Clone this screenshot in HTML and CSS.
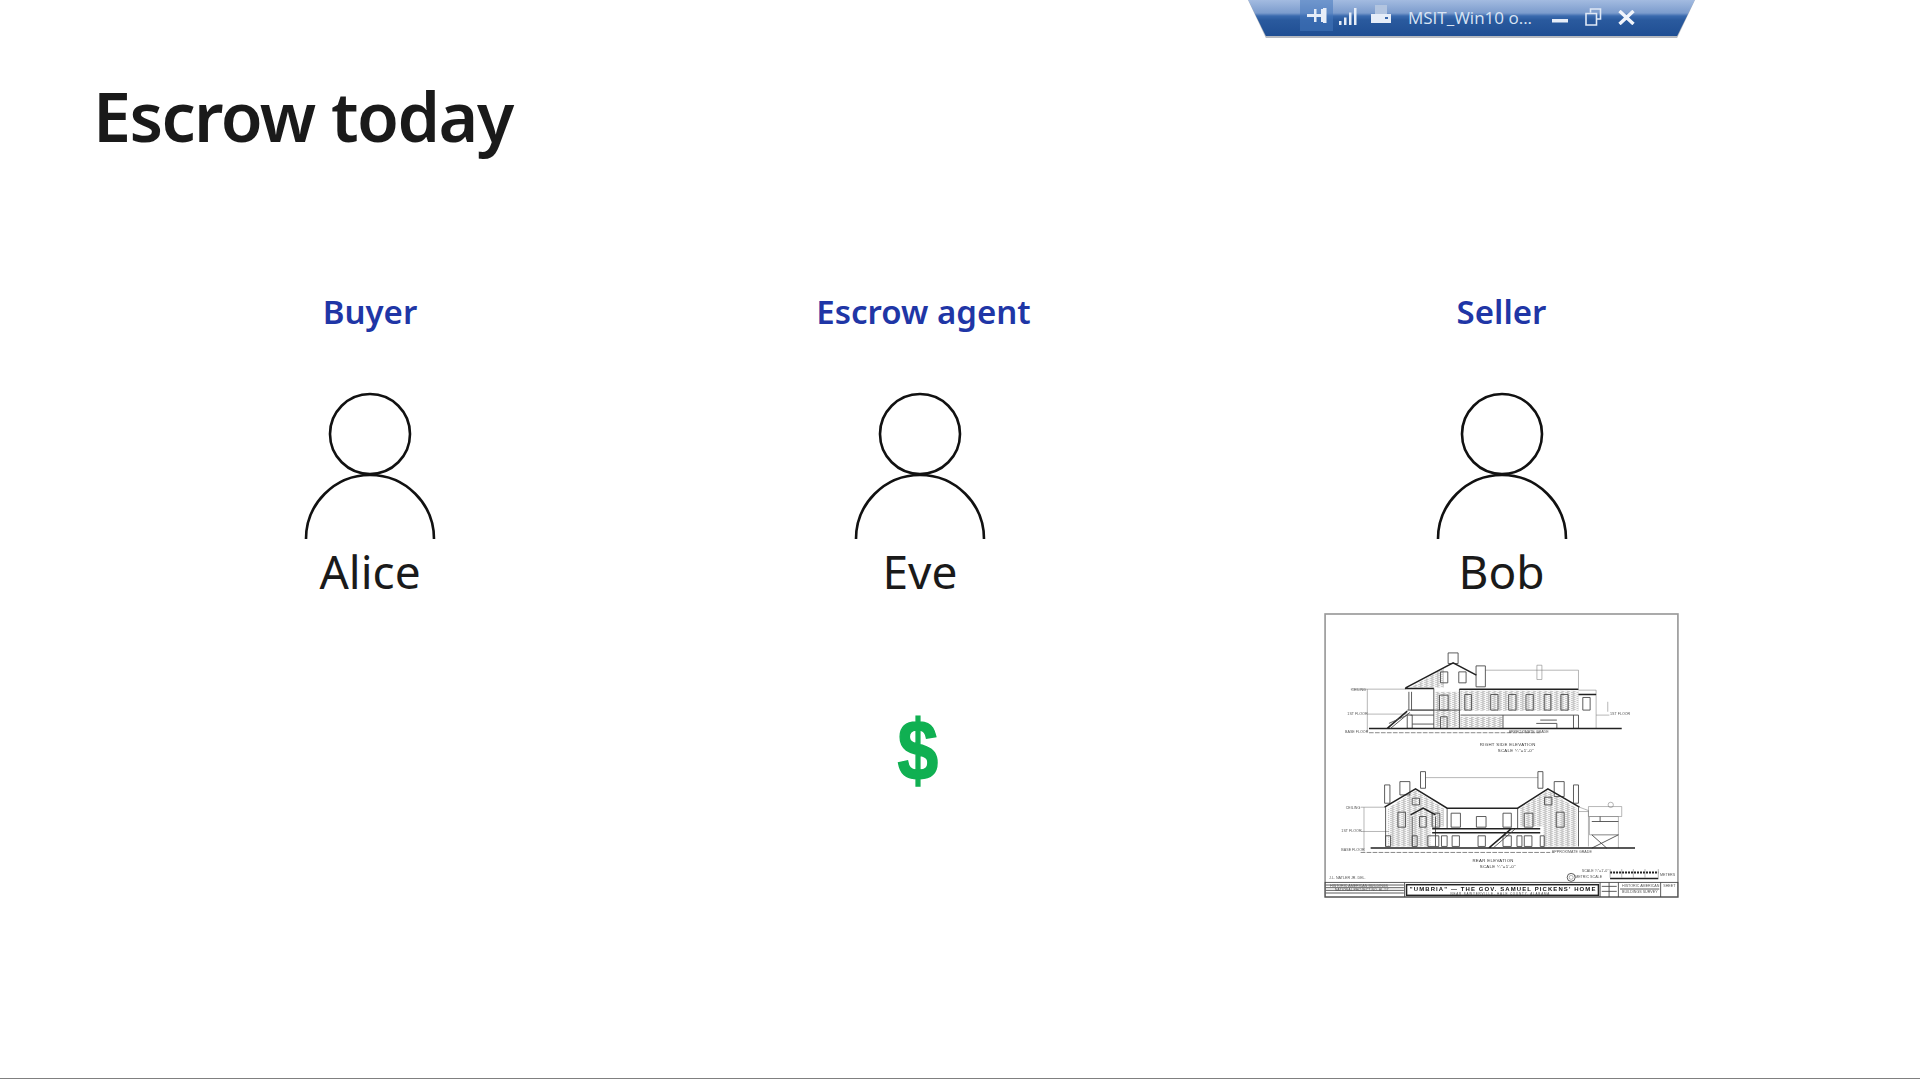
FILE: index.html
```html
<!DOCTYPE html>
<html lang="en">
<head>
<meta charset="utf-8">
<title>Escrow today</title>
<link rel="stylesheet" href="styles.css">
</head>
<body>
<div class="toolbar">
  <div class="toolbar-inner">
    <span class="tb-pin">
      <svg class="tb-icon" width="20" height="15" viewBox="0 0 20 15"><path class="tb-fill" d="M0 6h7V1h2.500v5H14V1h2V0h3.500v15H16v-1h-2V9H9.500v5H7V9H0z"/></svg>
    </span>
    <svg class="tb-icon tb-bars" width="18" height="17" viewBox="0 0 18 17"><path class="tb-fill" d="M0 13h2.500v4H0zM5 9.500h2.500V17H5zM10 4.500h2.500V17H10zM15 0h2.500v17H15z"/></svg>
    <svg class="tb-icon tb-print" width="20" height="18" viewBox="0 0 20 18"><path class="tb-paper" d="M4 0h12v9H4z"/><path class="tb-fill" d="M0 9h20v9H0z"/><path class="tb-blue" d="M14 12h3v2h-3z"/></svg>
    <span class="tb-title">MSIT_Win10 o...</span>
    <svg class="tb-icon tb-min" width="16" height="4" viewBox="0 0 16 4"><path class="tb-fill" d="M0 0h16v3.500H0z"/></svg>
    <svg class="tb-icon tb-restore" width="17" height="18" viewBox="0 0 17 18"><path class="tb-line" d="M5.500 4.500V1h10v10h-4M1 7V5.500h10.500V17H1z"/></svg>
    <svg class="tb-icon tb-close" width="17" height="15" viewBox="0 0 17 15"><path class="tb-stroke" d="M1.500 1l14 13M15.500 1l-14 13"/></svg>
  </div>
</div>

<main class="slide">
  <h1 class="title">Escrow today</h1>
  <div class="parties">
    <section class="party">
      <h2 class="role">Buyer</h2>
      <svg class="person" width="132" height="148" viewBox="0 0 132 148"><circle cx="66" cy="42" r="40"/><path d="M2 147a64 64 0 0 1 128 0"/></svg>
      <p class="name">Alice</p>
    </section>
    <section class="party">
      <h2 class="role role-agent">Escrow agent</h2>
      <svg class="person" width="132" height="148" viewBox="0 0 132 148"><circle cx="66" cy="42" r="40"/><path d="M2 147a64 64 0 0 1 128 0"/></svg>
      <p class="name">Eve</p>
      <div class="dollar">$</div>
    </section>
    <section class="party">
      <h2 class="role">Seller</h2>
      <svg class="person" width="132" height="148" viewBox="0 0 132 148"><circle cx="66" cy="42" r="40"/><path d="M2 147a64 64 0 0 1 128 0"/></svg>
      <p class="name">Bob</p>
      <svg class="plan" width="355" height="285" viewBox="40 38 1067 857">
        <defs>
          <pattern id="hatch" width="17" height="6" patternUnits="userSpaceOnUse"><path d="M0 1.500h10M6 4.500h9" stroke="#888" stroke-width="1.500"/></pattern>
        </defs>
        <rect class="frame" x="43" y="41" width="1061" height="851"/>

        <!-- upper elevation -->
        <path class="hatch" d="M300 262L400 205v57zM450 272h355v60H450zM578 350h-128v32h128z"/>
        <path class="hatch" d="M375 275h70v105h-70z"/>
        <path class="thin" d="M525 210H805V265M680 195h15v43h-15zM858 270H805M858 270v115M805 283h53M120 267H285M170 267V395M170 342h130M893 305v30M858 345h40"/>
        <path class="med" d="M413 158h30v32h-30zM497 197h28v63h-28zM463 283h20v47h-20zM541 283h22v47h-22zM595 283h22v47h-22zM647 283h22v47h-22zM702 283h20v47h-20zM752 283h22v47h-22zM387 285h26v45h-26zM390 350h20v35h-20zM390 215h22v33h-22zM445 215h22v33h-22zM818 292h22v38h-22zM370 265v120M447 267v118M295 275v55M303 275v55M290 345h15v40h-15zM300 330h70M300 345h70M290 330h160M450 345h355M578 345v40M790 345v40h15v-40M678 370h62v15M690 360h50M305 372h65"/>
        <path class="heavy" d="M285 263L428 188L498 225M283 265h87M447 267h358M805 283h53M230 385L290 333M175 385h760"/>
        <path class="med" d="M240 385L298 337M290 345L235 370"/>
        <path class="dash" d="M175 398H690"/>
        <g class="label">
          <text x="122" y="272">CEILING</text>
          <text x="110" y="345">1ST FLOOR</text>
          <text x="103" y="400">BASE FLOOR</text>
          <text x="900" y="346">1ST FLOOR</text>
          <text x="595" y="399">APPROXIMATE GRADE</text>
        </g>
        <g class="caption">
          <text x="508" y="439">RIGHT SIDE ELEVATION</text>
          <text x="562" y="456">SCALE ¼"=1'-0"</text>
        </g>

        <!-- lower elevation -->
        <path class="hatch" d="M232 625L315 572L400 625V680H360V740H232zM630 625L713 572L800 625V740H700V680H630z"/>
        <path class="thin" d="M345 533H683M808 622L835 632V740M835 620h100v30H835zM838 650h87v55H838zM845 705h80v40M150 622H225M160 622V755M150 695h85M902 615m-8 0a8 8 0 1 0 16 0a8 8 0 1 0 -16 0M805 635h30"/>
        <path class="med" d="M330 515h15v50h-15zM683 515h15v50h-15zM268 545h30v40h-30zM222 555h16v55h-16zM732 545h30v45h-30zM790 555h15v55h-15zM305 595h22v20h-22zM703 592h22v23h-22zM262 637h23v45h-23zM738 637h24v45h-24zM365 640h23v42h-23zM422 640h28v42h-28zM498 650h29v32h-29zM578 640h25v42h-25zM642 640h26v42h-26zM327 650h20v32h-20zM225 622V740M805 622V740M305 650v90M375 650v90M410 625v60M622 625v60M225 708h15v32h-15zM305 708h15v32h-15zM352 708h33v32h-33zM393 708h17v32h-17zM425 708h22v32h-22zM503 708h22v32h-22zM578 708h25v32h-25zM620 708h15v32h-15zM642 708h23v32h-23zM690 708h12v32h-12zM845 745L925 705M845 705L890 745M845 665h80M870 650v15"/>
        <path class="heavy" d="M222 622L315 567L410 625H622L713 567L808 622M300 645L338 625L375 645M365 687h325M365 699h325M535 745L605 685M180 745h795"/>
        <path class="med" d="M548 745L615 687"/>
        <path class="dash" d="M150 758H720"/>
        <g class="label">
          <text x="105" y="628">CEILING</text>
          <text x="92" y="698">1ST FLOOR</text>
          <text x="92" y="755">BASE FLOOR</text>
          <text x="725" y="761">APPROXIMATE GRADE</text>
          <text x="815" y="816">SCALE ¼"=1'-0"</text>
          <text x="795" y="836">METRIC SCALE</text>
          <text x="1050" y="830">METERS</text>
          <text x="55" y="838">J.L. NATLER JR. DEL.</text>
        </g>
        <g class="caption">
          <text x="486" y="788">REAR ELEVATION</text>
          <text x="508" y="805">SCALE ¼"=1'-0"</text>
        </g>
        <path class="dashbold" d="M900 818H1045"/>
        <path class="heavy" d="M900 836H1045"/>
        <path class="thin" d="M900 808v26M935 808v26M970 808v26M1005 808v26M1045 808v26"/>
        <circle class="med" cx="783" cy="833" r="12"/>
        <circle class="thin" cx="783" cy="833" r="6"/>

        <!-- title block -->
        <rect class="med" x="43" y="848" width="1061" height="44"/>
        <rect class="heavy" x="288" y="855" width="577" height="32"/>
        <path class="med" d="M282 848v44M870 848v44M925 848v44M1052 848v44M45 856h235M45 864h235M45 872h235M45 880h235M875 860h45M875 875h45M897 848v44M930 868h118"/>
        <text class="block-title" x="298" y="875">"UMBRIA" — THE GOV. SAMUEL PICKENS' HOME</text>
        <text class="block-sub" x="420" y="885">NEAR SAWYERVILLE, HALE COUNTY, ALABAMA</text>
        <g class="label">
          <text x="58" y="861">HISTORIC AMERICAN BUILDINGS</text>
          <text x="72" y="875">NATIONAL PROJECT NO. AL-57</text>
          <text x="936" y="862">HISTORIC AMERICAN</text>
          <text x="936" y="880">BUILDINGS SURVEY</text>
          <text x="1060" y="862">SHEET</text>
        </g>
      </svg>
    </section>
  </div>
</main>
</body>
</html>
```

FILE: styles.css
```css
* { box-sizing: border-box; }

html, body { margin: 0; height: 100%; }

body {
  background: #fff;
  overflow: hidden;
  font-family: "Noto Sans", "Open Sans", "Liberation Sans", sans-serif;
}

.slide {
  height: 1079px;
  border-bottom: 1px solid #808080;
  padding: 70px 0 0 93px;
  display: flex;
  flex-direction: column;
}

.title {
  margin: 0;
  font-size: 68px;
  line-height: 92px;
  font-weight: 600;
  letter-spacing: -1.5px;
  color: #1a1a1a;
}

.parties {
  margin: 126px 0 0 -23px;
  display: grid;
  grid-template-columns: 600px 500px 663px;
}

.party {
  display: flex;
  flex-direction: column;
  align-items: center;
}

.role {
  margin: 0;
  font-size: 33px;
  line-height: 48px;
  font-weight: 600;
  color: #1f36a6;
}

.role-agent { padding-left: 7px; }

.person {
  margin-top: 56px;
  fill: none;
  stroke: #111;
  stroke-width: 2.6;
}

.name {
  margin: -1px 0 0;
  font-size: 46px;
  line-height: 64px;
  color: #1a1a1a;
}

.dollar {
  margin: 97px 0 0 -4px;
  font-family: "Liberation Sans", sans-serif;
  font-weight: 700;
  font-size: 86px;
  line-height: 100px;
  color: #10b052;
  -webkit-text-stroke: 1.5px #10b052;
  transform: scaleX(.85);
}

.plan {
  margin-top: 10px;
  filter: blur(0.6px);
  fill: none;
}

.frame { stroke: #9a9a9a; stroke-width: 5; fill: #fff; }
.thin { stroke: #777; stroke-width: 1.6; fill: none; }
.med { stroke: #444; stroke-width: 2.600; fill: none; }
.heavy { stroke: #222; stroke-width: 4.5; fill: none; }
.hatch { fill: url(#hatch); stroke: none; }
.dash { stroke: #888; stroke-width: 3; stroke-dasharray: 14 4; fill: none; }
.dashbold { stroke: #222; stroke-width: 6; stroke-dasharray: 6 3; fill: none; }

.label text {
  font-family: "Liberation Sans", sans-serif;
  font-size: 11px;
  fill: #555;
}

.caption text {
  font-family: "Liberation Sans", sans-serif;
  font-size: 13px;
  letter-spacing: 1px;
  fill: #333;
}

.block-title {
  font-family: "Liberation Sans", sans-serif;
  font-weight: 700;
  font-size: 18px;
  letter-spacing: 3.300px;
  fill: #111;
}

.block-sub {
  font-family: "Liberation Sans", sans-serif;
  font-size: 9px;
  letter-spacing: 2.500px;
  fill: #444;
}

/* remote-session bar that overlays the top of the slide */
.toolbar {
  position: absolute;
  top: 0;
  left: 1248px;
  width: 447px;
  height: 38px;
  background: #b5b9c0;
  clip-path: polygon(0 0, 100% 0, 96% 100%, 4% 100%);
}

.toolbar-inner {
  height: 36px;
  clip-path: polygon(0 0, 100% 0, 96% 100%, 4% 100%);
  background: linear-gradient(#a3bbe0 0, #7c9ccd 13px, #3a6aae 16px, #2a5a9e 20px, #1f4e93 100%);
  display: flex;
  align-items: center;
  padding: 0 0 2px 52px;
  color: #d9e4f4;
}

.tb-pin {
  width: 33px;
  height: 31px;
  margin-top: -3px;
  display: flex;
  align-items: center;
  justify-content: center;
  background: rgba(70, 120, 190, .55);
  flex: none;
}

.tb-icon { flex: none; display: block; }
.tb-fill { fill: #e6edf8; }
.tb-paper { fill: #b3c5e0; }
.tb-blue { fill: #3a68ab; }
.tb-line { fill: none; stroke: #dfe8f5; stroke-width: 1.6; }
.tb-stroke { fill: none; stroke: #f0f4fb; stroke-width: 3.4; }

.tb-bars { margin-left: 6px; margin-top: -2px; }
.tb-print { margin-left: 14px; margin-top: -6px; }
.tb-title {
  margin-left: 17px;
  font-size: 17px;
  white-space: nowrap;
  font-family: "Open Sans", sans-serif;
}
.tb-min { margin-left: 20px; margin-top: 8px; }
.tb-restore { margin-left: 17px; }
.tb-close { margin-left: 16px; }
```
